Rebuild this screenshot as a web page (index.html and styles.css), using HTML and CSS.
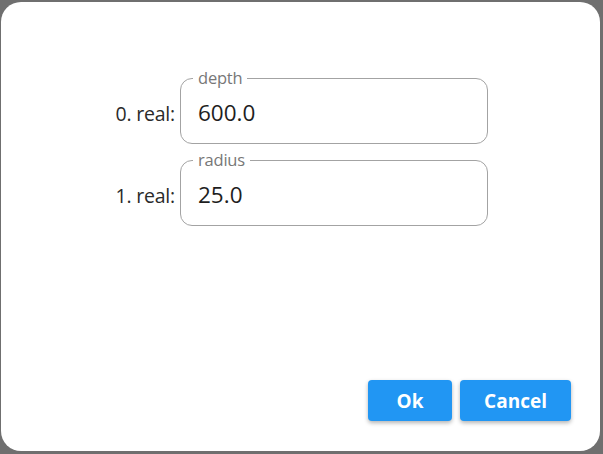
FILE: index.html
```html
<!DOCTYPE html>
<html>
<head>
<meta charset="utf-8">
<link rel="stylesheet" href="styles.css">
</head>
<body>
<div class="dialog">
  <div class="form">
    <div class="label">0. real:</div>
    <div class="field"><span class="legend">depth</span><span class="value">600.0</span></div>
    <div class="label">1. real:</div>
    <div class="field"><span class="legend">radius</span><span class="value">25.0</span></div>
  </div>
  <div class="actions">
    <button class="btn ok">Ok</button>
    <button class="btn cancel">Cancel</button>
  </div>
</div>
</body>
</html>
```
FILE: styles.css
```css
html, body {
  margin: 0;
  padding: 0;
}
body {
  background: #6f6f6f;
  width: 603px;
  height: 454px;
  overflow: hidden;
  font-family: "Open Sans", "Noto Sans", sans-serif;
  padding: 2px 3px 3px 1px;
  box-sizing: border-box;
}
.dialog {
  background: #fff;
  height: 449px;
  border-radius: 20px;
  display: flex;
  flex-direction: column;
  box-sizing: border-box;
  padding: 76px 29px 30px 0;
}
.form {
  display: grid;
  grid-template-columns: 112px 308px;
  column-gap: 5px;
  row-gap: 16px;
  margin-left: 62px;
  align-items: center;
}
.label {
  text-align: right;
  font-size: 19.5px;
  color: #2a2a2a;
  padding-top: 4px;
  letter-spacing: -0.2px;
}
.field {
  position: relative;
  height: 64px;
  border: 1px solid #a3a3a3;
  border-radius: 12px;
  display: flex;
  align-items: center;
  padding-left: 17px;
}
.legend {
  position: absolute;
  top: -11px;
  left: 12px;
  background: #fff;
  padding: 0 5px 0 5px;
  font-size: 16.5px;
  color: #777;
  line-height: 20px;
  letter-spacing: -0.2px;
}
.value {
  font-size: 22.5px;
  color: #1e1e1e;
  padding-top: 2px;
}
.actions {
  margin-top: auto;
  display: flex;
  justify-content: flex-end;
  gap: 8px;
}
.btn {
  font-family: "Open Sans", "Noto Sans", sans-serif;
  font-weight: 700;
  font-size: 19px;
  color: #fff;
  background: #2196f3;
  border: none;
  border-radius: 4px;
  height: 41px;
  box-shadow: 0 2px 4px rgba(0,0,0,0.3);
}
.ok { width: 84px; }
.cancel { width: 111px; }
```
